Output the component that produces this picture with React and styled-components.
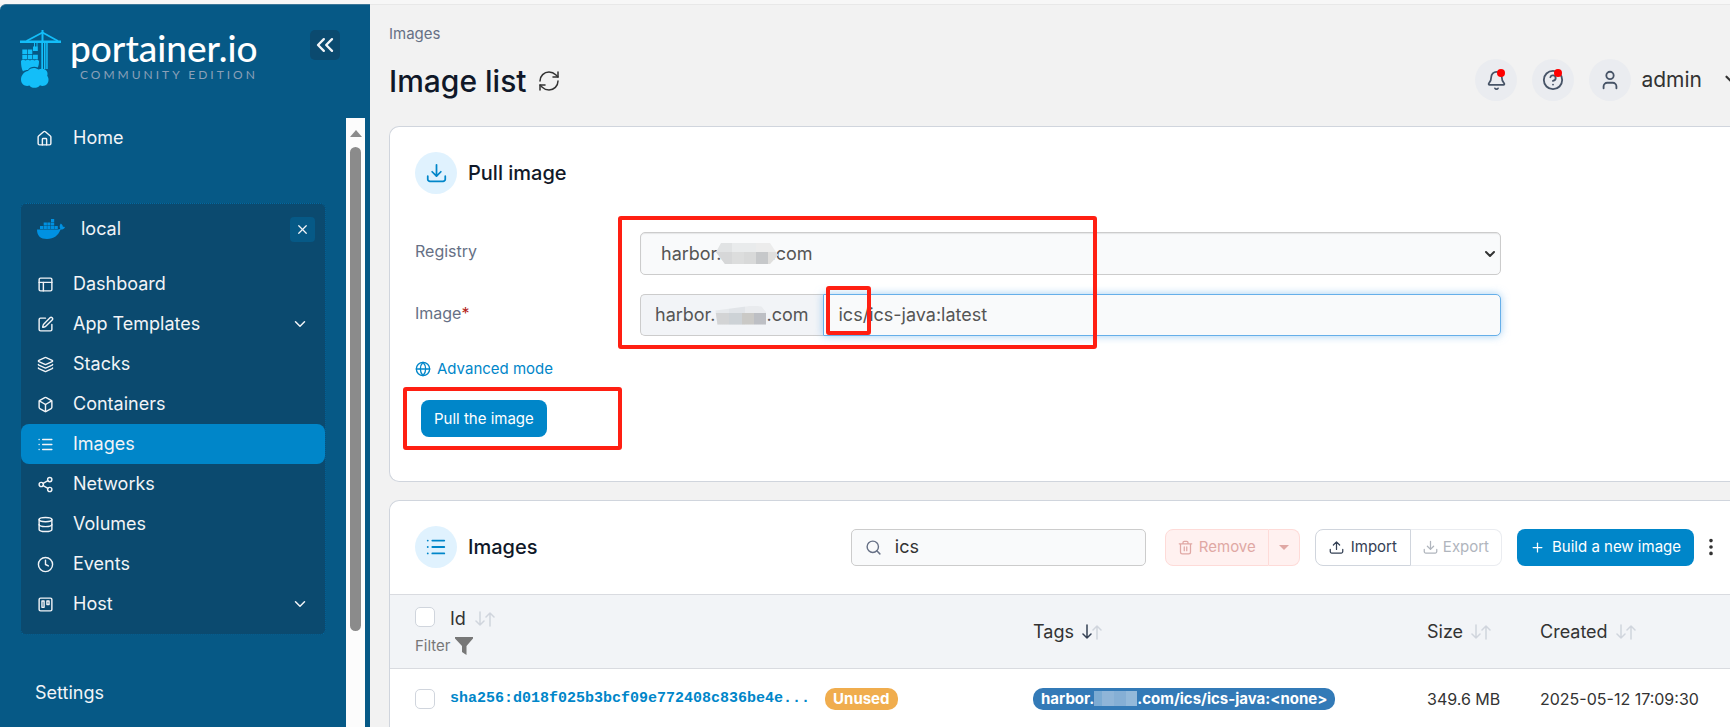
import styled, { createGlobalStyle, css } from "styled-components";
import {
  Bell,
  Box,
  ChevronDown,
  ChevronsLeft,
  Clock,
  Database,
  Edit,
  Globe,
  HelpCircle,
  House,
  Layers,
  Layout,
  List,
  MoreVertical,
  Plus,
  RefreshCw,
  Search,
  Share2,
  Trello,
  User,
  X,
} from "lucide-react";

const menu = [
  { label: "Dashboard", Icon: Layout },
  { label: "App Templates", Icon: Edit, more: true },
  { label: "Stacks", Icon: Layers },
  { label: "Containers", Icon: Box },
  { label: "Images", Icon: List, active: true },
  { label: "Networks", Icon: Share2 },
  { label: "Volumes", Icon: Database },
  { label: "Events", Icon: Clock },
  { label: "Host", Icon: Trello, more: true },
];

const rows = [
  {
    id: "sha256:d018f025b3bcf09e772408c836be4e...",
    size: "349.6 MB",
    created: "2025-05-12 17:09:30",
  },
];

function CraneLogo() {
  return (
    <svg width="42" height="60" viewBox="0 0 42 60" fill="#13bef9" aria-hidden="true">
      <path d="M0 10.5h41v2.5H0z" />
      <path d="M21.5 0h2v13h-2z" />
      <path d="M22.5 2.5 6.5 11M22.5 2.5 38 11" fill="none" stroke="#13bef9" strokeWidth="1.8" />
      <path d="M21.3 13h1.7v26h-1.7zM24 13h1.500v26H24zM26.200 13h1.500v26h-1.500z" />
      <path d="M14 13h1v4h-1zM16.500 13h1v4h-1zM13 16.500h4.800v4.500H13z" />
      <path d="M2.300 19.500h4.800v4.500H2.300zM7.800 19.500h4.500v4.500H7.800zM2.300 24.800h4.800v4.500H2.300zM7.800 24.800h4.500v4.500H7.800zM13 24.800h4.800v4.500H13z" />
      <path d="M1 31c1-1.500 3-1.500 4.500-.5 1.500-1 3-1 4.500 0 1.500-1 3-1 4.500 0 1.500-1 3.500-1 4.500.5 0 2.500-.3 4.500-1.200 6.500-3.500-1.500-8-.7-9.800 2.500-2.300 0-4 .5-5 1.500C1.500 39 1 35 1 31z" />
      <path d="M8 41c2-3.500 7.500-4 10.500-1.500 4-2 9 0 9 4 0 1 0 1.500-.3 2.300 2.300 3 1.700 8.200-2.200 9.700-2 .8-4 .5-5-.2-2.500 3.500-9 3.200-10.500.2C5.500 57 1 54.500 1 49.500c0-4 3-8 7-8.500z" />
    </svg>
  );
}

function DockerLogo() {
  return (
    <svg width="28" height="20" viewBox="0 0 28 20" fill="#0091e2" aria-hidden="true">
      <path d="M14 0h3.200v3H14zM6.700 3.500h3.200v3H6.700zM10.300 3.500h3.200v3h-3.200zM14 3.500h3.200v3H14zM3 7h3.200v3H3zM6.700 7h3.200v3H6.700zM10.300 7h3.200v3h-3.200zM14 7h3.200v3H14zM17.600 7h3.200v3h-3.200z" />
      <path d="M0 10.500h20c1.500 0 2.600-.4 3.300-.8-1-1.600-.8-3.800.5-5.200 1.300.9 2 2 2.100 3.300 1 0 1.700.1 2.100.5-.8 1.700-2.400 2.400-4.400 2.300C21.300 16.500 17 20 10 20 3.500 20 0 17 0 10.500z" />
    </svg>
  );
}

function TrayIcon({ up, size }) {
  return (
    <svg
      width={size}
      height={size}
      viewBox="0 0 24 24"
      fill="none"
      stroke="currentColor"
      strokeWidth="2"
      strokeLinecap="round"
      strokeLinejoin="round"
      aria-hidden="true"
    >
      <path d="M2 15v3.500A2.500 2.500 0 0 0 4.500 21h15a2.500 2.500 0 0 0 2.500-2.500V15" />
      <path d={up ? "M12 15V3M7 8l5-5 5 5" : "M12 2v13M7 10l5 5 5-5"} />
    </svg>
  );
}

function TrashIcon() {
  return (
    <svg
      width="15"
      height="15"
      viewBox="0 0 24 24"
      fill="none"
      stroke="currentColor"
      strokeWidth="2"
      strokeLinecap="round"
      strokeLinejoin="round"
      aria-hidden="true"
    >
      <path d="M2 6h20M8 6V4q0-2 2-2h4q2 0 2 2v2M4 6v13q0 3 3 3h10q3 0 3-3V6M10 11v6M14 11v6" />
    </svg>
  );
}

function FilterIcon() {
  return (
    <svg width="18" height="18" viewBox="0 0 18 18" fill="currentColor" aria-hidden="true">
      <path d="M0 0h18v1.500L11.500 9v9L7 15V9L0 1.500z" />
    </svg>
  );
}

function SortIcon({ down }) {
  return (
    <SortSvg width="20" height="16" viewBox="0 0 20 16" aria-hidden="true">
      <path d="M5 1v13M1 10l4 4 4-4" stroke={down ? "#344054" : "#d0d5dd"} />
      <path d="M15 15V2M11 6l4-4 4 4" stroke="#d0d5dd" />
    </SortSvg>
  );
}

function Sidebar() {
  return (
    <Aside>
      <Brand>
        <CraneLogo />
        <BrandText>
          <BrandName>portainer.io</BrandName>
          <Edition>COMMUNITY EDITION</Edition>
        </BrandText>
        <CollapseButton aria-label="Collapse sidebar">
          <ChevronsLeft size={28} />
        </CollapseButton>
      </Brand>
      <NavArea>
        <Nav>
          <HomeLink href="#home">
            <House size={17} strokeWidth={2} />
            Home
          </HomeLink>
          <Environment>
            <EnvironmentHead>
              <DockerLogo />
              local
              <CloseButton aria-label="Close environment">
                <X size={15} />
              </CloseButton>
            </EnvironmentHead>
            {menu.map(({ label, Icon, active, more }) => (
              <MenuLink key={label} href={`#${label}`} $active={active}>
                <Icon size={17} />
                <span>{label}</span>
                {more && <ChevronDown size={18} />}
              </MenuLink>
            ))}
          </Environment>
          <SectionTitle>Settings</SectionTitle>
        </Nav>
        <ScrollTrack>
          <ScrollArrow />
          <ScrollThumb />
        </ScrollTrack>
      </NavArea>
    </Aside>
  );
}

function PageHeader() {
  return (
    <Header>
      <div>
        <Crumb>Images</Crumb>
        <Title>
          Image list
          <IconButton aria-label="Refresh">
            <RefreshCw size={24} strokeWidth={1.5} />
          </IconButton>
        </Title>
      </div>
      <UserTools>
        <RoundButton aria-label="Notifications">
          <Bell size={21} />
          <Dot />
        </RoundButton>
        <RoundButton aria-label="Help">
          <HelpCircle size={22} />
          <Dot />
        </RoundButton>
        <UserButton>
          <Round>
            <User size={22} />
          </Round>
          admin
          <ChevronDown size={26} />
        </UserButton>
      </UserTools>
    </Header>
  );
}

function PullImage() {
  return (
    <Card>
      <CardTitle>
        <Badge>
          <TrayIcon size={21} />
        </Badge>
        Pull image
      </CardTitle>
      <Form onSubmit={(e) => e.preventDefault()}>
        <Fields>
          <Label htmlFor="registry">Registry</Label>
          <SelectWrap>
            <Select id="registry">
              <option>harbor.xxxxx.com</option>
            </Select>
            <SelectMosaic />
            <ChevronDown size={16} strokeWidth={3} />
          </SelectWrap>
          <Label htmlFor="image">
            Image<Required>*</Required>
          </Label>
          <InputGroup>
            <Addon>
              harbor.
              <AddonMosaic />
              .com
            </Addon>
            <Input id="image" defaultValue="ics/ics-java:latest" />
            <Highlight $area="path" />
          </InputGroup>
          <Highlight $area="fields" />
        </Fields>
        <ModeLink href="#advanced">
          <Globe size={16} />
          Advanced mode
        </ModeLink>
        <Submit>
          <PrimaryButton>Pull the image</PrimaryButton>
          <Highlight $area="submit" />
        </Submit>
      </Form>
    </Card>
  );
}

function ImagesTable() {
  return (
    <Card $flush>
      <Toolbar>
        <CardTitle>
          <Badge>
            <List size={22} />
          </Badge>
          Images
        </CardTitle>
        <SearchBox>
          <Search size={17} />
          <input aria-label="Search" defaultValue="ics" />
        </SearchBox>
        <Group>
          <DangerButton disabled>
            <TrashIcon />
            Remove
          </DangerButton>
          <DangerButton disabled aria-label="More remove options">
            <Caret />
          </DangerButton>
        </Group>
        <Group>
          <PlainButton>
            <TrayIcon up size={15} />
            Import
          </PlainButton>
          <PlainButton disabled>
            <TrayIcon size={15} />
            Export
          </PlainButton>
        </Group>
        <PrimaryButton>
          <Plus size={15} />
          Build a new image
        </PrimaryButton>
        <IconButton aria-label="More">
          <MoreVertical size={22} strokeWidth={2} />
        </IconButton>
      </Toolbar>
      <Table>
        <colgroup>
          <col />
          <col className="tags" />
          <col className="size" />
          <col className="created" />
        </colgroup>
        <thead>
          <tr>
            <th>
              <IdCell $top>
                <Checkbox aria-label="Select all" />
                <span>Id</span>
                <SortIcon />
              </IdCell>
              <FilterButton>
                Filter <FilterIcon />
              </FilterButton>
            </th>
            <th>
              <HeadCell>
                Tags <SortIcon down />
              </HeadCell>
            </th>
            <th>
              <HeadCell>
                Size <SortIcon />
              </HeadCell>
            </th>
            <th>
              <HeadCell>
                Created <SortIcon />
              </HeadCell>
            </th>
          </tr>
        </thead>
        <tbody>
          {rows.map((row) => (
            <tr key={row.id}>
              <td>
                <IdCell>
                  <Checkbox aria-label="Select image" />
                  <HashLink href="#image">{row.id}</HashLink>
                  <Pill $color="#f0ad4e">Unused</Pill>
                </IdCell>
              </td>
              <td>
                <Pill $color="#337ab7">
                  harbor.
                  <TagMosaic />
                  .com/ics/ics-java:&lt;none&gt;
                </Pill>
              </td>
              <td>{row.size}</td>
              <td>{row.created}</td>
            </tr>
          ))}
        </tbody>
      </Table>
    </Card>
  );
}

function App() {
  return (
    <>
      <GlobalStyle />
      <Page>
        <Sidebar />
        <Main>
          <PageHeader />
          <PullImage />
          <ImagesTable />
        </Main>
      </Page>
    </>
  );
}

export default App;

const GlobalStyle = createGlobalStyle`
  * {
    box-sizing: border-box;
  }

  body {
    margin: 0;
    overflow: hidden;
    background: #f2f2f2;
    color: #333333;
    font-family: Inter, "Liberation Sans", sans-serif;
    font-size: 16px;
    line-height: 20px;
  }

  button, input, select {
    font: inherit;
    color: inherit;
  }

  button {
    padding: 0;
    border: 0;
    background: none;
  }

  a {
    text-decoration: none;
  }

  svg {
    flex: none;
  }
`;

const Page = styled.div`
  display: flex;
  height: 100vh;
  border-top: 4px solid #f7f7f7;
  overflow: hidden;
`;

const Aside = styled.aside`
  display: flex;
  flex-direction: column;
  flex: none;
  width: 370px;
  padding-right: 5px;
  border-top: 1px solid #3d7798;
  border-top-left-radius: 6px;
  background: #065986;
  color: #f2f4f7;
  font-size: 18px;
`;

const Brand = styled.div`
  display: flex;
  gap: 8px;
  height: 113px;
  padding: 25px 25px 0 20px;
`;

const BrandText = styled.div`
  display: flex;
  flex-direction: column;
  gap: 3px;
  flex: 1;
`;

const BrandName = styled.span`
  color: #ffffff;
  font-family: Lato, sans-serif;
  font-size: 37px;
  font-weight: 500;
  line-height: 36px;
`;

const Edition = styled.span`
  padding-left: 10px;
  color: #8ba0b8;
  font-family: Lato, sans-serif;
  font-size: 12px;
  line-height: 12px;
  letter-spacing: 3px;
`;

const CollapseButton = styled.button`
  display: grid;
  place-items: center;
  width: 30px;
  height: 30px;
  border-radius: 5px;
  background: #0b4a6f;
`;

const NavArea = styled.div`
  display: flex;
  flex: 1;
  min-height: 0;
`;

const Nav = styled.nav`
  flex: 1;
  padding: 0 20px;
  overflow: hidden;
`;

const linkStyle = css`
  display: flex;
  align-items: center;
  height: 40px;
  color: inherit;
`;

const HomeLink = styled.a`
  ${linkStyle}
  gap: 20px;
  padding-left: 16px;
`;

const Environment = styled.div`
  margin-top: 45px;
  padding-bottom: 10px;
  border: 1px dotted #026aa2;
  border-radius: 6px;
  background: #0b4a6f;
`;

const EnvironmentHead = styled.div`
  display: flex;
  align-items: center;
  gap: 16px;
  height: 50px;
  margin-bottom: 10px;
  padding: 0 10px 0 16px;
`;

const CloseButton = styled.button`
  display: grid;
  place-items: center;
  width: 25px;
  height: 25px;
  margin-left: auto;
  border-radius: 4px;
  background: #065986;
`;

const MenuLink = styled.a`
  ${linkStyle}
  gap: 19px;
  padding: 0 16px;
  border-radius: 8px;
  background: ${({ $active }) => ($active ? "#0086c9" : "transparent")};

  span {
    flex: 1;
  }
`;

const SectionTitle = styled.div`
  margin-top: 48px;
  padding-left: 15px;
`;

const ScrollTrack = styled.div`
  display: flex;
  flex-direction: column;
  align-items: center;
  width: 19px;
  padding-top: 12px;
  background: #fcfcfc;
`;

const ScrollArrow = styled.div`
  border: 6px solid transparent;
  border-top: 0;
  border-bottom: 7px solid #8b8b8b;
`;

const ScrollThumb = styled.div`
  width: 11px;
  height: 81%;
  margin-top: 10px;
  border-radius: 6px;
  background: #8b8b8b;
`;

const Main = styled.main`
  flex: 1;
  min-width: 0;
  padding-left: 19px;
  border-top: 1px solid #e8e8e8;
`;

const Header = styled.header`
  display: flex;
  justify-content: space-between;
  align-items: flex-end;
  height: 121px;
  padding-bottom: 25px;
`;

const Crumb = styled.div`
  color: #667085;
  font-size: 15px;
`;

const Title = styled.h1`
  display: flex;
  align-items: center;
  gap: 10px;
  margin: 17px 0 0;
  color: #101828;
  font-size: 30px;
  font-weight: 500;
  line-height: 40px;
`;

const IconButton = styled.button`
  display: grid;
  place-items: center;
  color: #333333;
`;

const UserTools = styled.div`
  display: flex;
  gap: 15px;
  /* the chevron of the user menu runs past the window edge */
  margin-right: -16px;
`;

const Round = styled.span`
  display: grid;
  place-items: center;
  width: 42px;
  height: 42px;
  border-radius: 50%;
  background: #eaecf0;
  color: #475467;
`;

const RoundButton = styled(Round).attrs({ as: "button" })`
  position: relative;
`;

const Dot = styled.i`
  position: absolute;
  top: 10px;
  right: 12px;
  width: 8px;
  height: 8px;
  border-radius: 50%;
  background: #ff0000;
`;

const UserButton = styled.button`
  display: flex;
  align-items: center;
  gap: 10px;
  font-size: 21px;

  > svg {
    margin-left: 8px;
  }
`;

const Card = styled.section`
  min-height: ${({ $flush }) => ($flush ? "300px" : "356px")};
  margin-bottom: 18px;
  padding: ${({ $flush }) => ($flush ? "0" : "25px 0 0 25px")};
  border: 1px solid #d0d5dd;
  border-right: 0;
  border-radius: 10px 0 0 10px;
  background: #ffffff;
`;

const CardTitle = styled.h2`
  display: flex;
  align-items: center;
  gap: 11px;
  margin: 0;
  color: #101828;
  font-size: 20px;
  font-weight: 500;
`;

const Badge = styled.span`
  display: grid;
  place-items: center;
  width: 42px;
  height: 42px;
  border-radius: 50%;
  background: #e0f2fe;
  color: #0086c9;
`;

const Form = styled.form`
  padding-top: 38px;
`;

const Fields = styled.div`
  display: grid;
  grid-template-columns: 225px minmax(0, 861px);
  row-gap: 19px;
  position: relative;
`;

const Label = styled.label`
  padding-top: 9px;
  color: #667085;
`;

const Required = styled.span`
  color: #b42318;
`;

const fieldStyle = css`
  border: 1px solid #cccccc;
  border-radius: 5px;
  background: #f9fafb;
  color: #555555;
  font-size: 18px;
`;

const SelectWrap = styled.div`
  display: grid;
  position: relative;

  svg {
    position: absolute;
    top: 14px;
    right: 3px;
  }
`;

const Select = styled.select`
  ${fieldStyle}
  appearance: none;
  height: 43px;
  padding: 0 20px;
  box-shadow: inset 0 1px 1px rgba(0, 0, 0, 0.08);
`;

const SelectMosaic = styled.i`
  position: absolute;
  top: 11px;
  left: 76px;
  width: 62px;
  height: 21px;
  background:
    linear-gradient(90deg, #d6d7d8 16px, #dcdddd 16px 28px, #d8d9d9 28px 40px, #c6c8ca 40px 52px, #e0dfdd 52px)
      0 9px / 100% 12px no-repeat,
    linear-gradient(90deg, #e1e3e4 16px, #e9ebec 16px 40px, #ececec 40px);
  clip-path: polygon(5px 0, 54px 0, 100% 12px, 54px 100%, 9px 100%, 0 9px);
`;

const InputGroup = styled.div`
  display: flex;
  position: relative;
  height: 42px;
`;

const Addon = styled.span`
  ${fieldStyle}
  display: flex;
  align-items: center;
  padding: 0 14px;
  border-right: 0;
  border-radius: 5px 0 0 5px;
  background: #f2f4f7;
`;

const AddonMosaic = styled.i`
  width: 51px;
  height: 19px;
  background:
    linear-gradient(90deg, #d3d4d5 14px, #cdd2d6 14px 27px, #cac9c6 27px 39px, #bdbfc4 39px)
      0 7px / 100% 12px no-repeat,
    linear-gradient(90deg, #e6e9ec 14px, #e1e4e8 14px 30px, #e9ebee 30px);
  clip-path: polygon(0 5px, 38px 0, 46px 1px, 100% 7px, 100% 100%, 2px 100%);
`;

const Input = styled.input`
  ${fieldStyle}
  flex: 1;
  min-width: 0;
  padding: 0 15px;
  border-color: #66afe9;
  border-radius: 0 5px 5px 0;
  box-shadow: 0 0 8px rgba(102, 175, 233, 0.6);
  outline: 0;
`;

const areas = {
  fields: css`
    top: -16px;
    left: 203px;
    width: 479px;
    height: 133px;
  `,
  path: css`
    top: -8px;
    left: 186px;
    width: 45px;
    height: 49px;
  `,
  submit: css`
    top: -13px;
    left: -12px;
    width: 219px;
    height: 63px;
  `,
};

const Highlight = styled.div`
  position: absolute;
  border: 4px solid #ff1f12;
  border-radius: 3px;
  pointer-events: none;
  ${({ $area }) => areas[$area]}
`;

const ModeLink = styled.a`
  display: flex;
  align-items: center;
  gap: 6px;
  margin-top: 23px;
  color: #0086c9;
  font-size: 15px;
`;

const Submit = styled.div`
  display: flex;
  position: relative;
  margin-top: 21px;
  padding-left: 6px;
`;

const buttonStyle = css`
  display: flex;
  align-items: center;
  gap: 7px;
  height: 37px;
  padding: 0 13px;
  border-radius: 8px;
  font-size: 15px;
  white-space: nowrap;
`;

const PrimaryButton = styled.button`
  ${buttonStyle}
  background: #0086c9;
  color: #ffffff;
`;

const Toolbar = styled.div`
  display: flex;
  align-items: center;
  gap: 15px;
  height: 93px;
  padding: 0 14px 1px 25px;

  > :last-child {
    width: 16px;
    margin-left: -9px;
  }
`;

const SearchBox = styled.label`
  ${fieldStyle}
  display: flex;
  align-items: center;
  gap: 13px;
  width: 295px;
  height: 37px;
  margin-left: auto;
  margin-right: 4px;
  padding: 0 13px;
  color: #667085;

  input {
    flex: 1;
    min-width: 0;
    padding: 0;
    border: 0;
    outline: 0;
    background: none;
    color: #333333;
  }
`;

const Group = styled.div`
  display: flex;

  button:first-child {
    border-radius: 8px 0 0 8px;
  }

  button:last-child {
    border-left: 0;
    border-radius: 0 8px 8px 0;
  }
`;

const DangerButton = styled.button`
  ${buttonStyle}
  gap: 6px;
  padding: 0 12px;
  border: 1px solid #fedbd8;
  background: #fff1f0;
  color: #e0a8a4;

  &:last-child {
    padding: 0 10px;
  }
`;

const PlainButton = styled.button`
  ${buttonStyle}
  border: 1px solid #d0d5dd;
  background: #ffffff;
  color: #344054;

  &:disabled {
    gap: 5px;
    padding: 0 12px;
    border-color: #eaecf0;
    color: #b0b5bd;
  }
`;

const Caret = styled.i`
  border: 5px solid transparent;
  border-top-color: #e0a8a4;
  border-bottom: 0;
`;

const Table = styled.table`
  width: 100%;
  border-collapse: collapse;
  table-layout: fixed;

  .tags {
    width: 394px;
  }

  .size {
    width: 113px;
  }

  .created {
    width: 198px;
  }

  th {
    height: 74px;
    padding: 0 8px;
    border: solid #d9dbe0;
    border-width: 1px 0;
    background: #f2f4f7;
    font-size: 18px;
    font-weight: 400;
    text-align: left;
  }

  td {
    height: 60px;
    padding: 0 8px;
  }

  th:first-child,
  td:first-child {
    padding-left: 25px;
  }
`;

const IdCell = styled.div`
  display: flex;
  align-items: ${({ $top }) => ($top ? "flex-start" : "center")};
  gap: 15px;
  line-height: 24px;

  svg {
    align-self: center;
    margin-left: -6px;
  }
`;

const HeadCell = styled.div`
  display: flex;
  align-items: center;
  gap: 8px;
`;

const SortSvg = styled.svg`
  fill: none;
  stroke-width: 1.5;
  stroke-linecap: round;
  stroke-linejoin: round;
`;

const Checkbox = styled.input.attrs({ type: "checkbox" })`
  appearance: none;
  flex: none;
  width: 20px;
  height: 20px;
  margin: 0;
  border: 1px solid #d0d5dd;
  border-radius: 5px;
  background: #ffffff;
`;

const FilterButton = styled.button`
  display: flex;
  align-items: center;
  gap: 4px;
  margin-top: 5px;
  color: #777777;
  font-size: 15px;
`;

const HashLink = styled.a`
  color: #0086c9;
  font-family: "Liberation Mono", monospace;
  font-size: 15px;
  font-weight: 700;
  white-space: nowrap;
`;

const Pill = styled.span`
  display: inline-flex;
  align-items: center;
  height: 22px;
  padding: 0 8px;
  border-radius: 10px;
  background: ${({ $color }) => $color};
  color: #ffffff;
  font-size: 15px;
  font-weight: 700;
  white-space: nowrap;
`;

const TagMosaic = styled.i`
  width: 43px;
  height: 15px;
  background: linear-gradient(90deg, #7babd3 8px, #8fb5d8 8px 20px, #85afd5 20px 32px, #93b9da 32px);
`;
